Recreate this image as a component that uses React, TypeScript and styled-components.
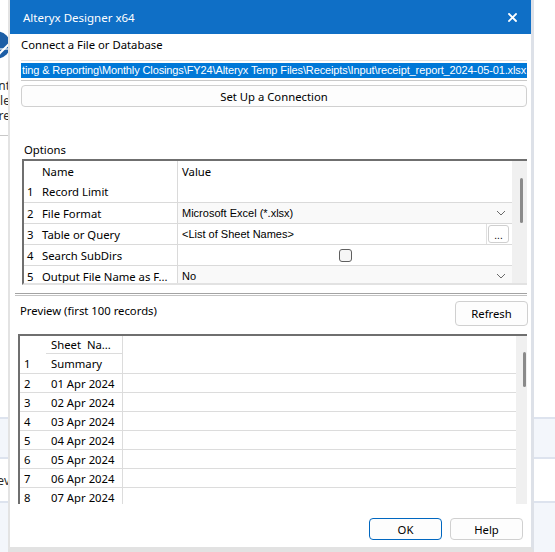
import React from "react";
import styled, { createGlobalStyle } from "styled-components";

const UI = `"Noto Sans", "Segoe UI", sans-serif`;
const CLASSIC = `"Liberation Sans", Arial, sans-serif`;

const GlobalStyle = createGlobalStyle`
  html, body { margin: 0; padding: 0; }
  body {
    font-family: ${UI};
    font-size: 11.3px;
    color: #000;
    background: #fff;
  }
`;

const Desktop = styled.div`
  position: relative;
  width: 555px;
  height: 552px;
  overflow: hidden;
  background: #fff;
`;

/* ---------- app window behind the dialog ---------- */

const Backdrop = styled.div`
  display: flex;
  flex-direction: column;
  height: 100%;
`;

const BackTop = styled.div`
  height: 417px;
  display: flex;
  flex-direction: column;
`;

const Clip = styled.div<{ $top?: number }>`
  width: 10px;
  overflow: hidden;
  display: flex;
  justify-content: flex-end;
  margin-top: ${(p) => p.$top ?? 0}px;
  white-space: nowrap;
  & > * {
    flex-shrink: 0;
  }
`;

const LogoClip = styled.div`
  width: 10px;
  height: 28px;
  margin-top: 31px;
  overflow: hidden;
  display: flex;
`;

const LogoSvg = styled.svg`
  flex-shrink: 0;
  margin-left: -17px;
`;

const BackText = styled.div`
  font-size: 12px;
  line-height: 15px;
  color: #2b2b2b;
`;

const BackRule = styled.div`
  width: 8px;
  height: 1px;
  margin-top: 12px;
  background: #c8c8c8;
`;

const Band = styled.div<{ $h: number; $pale?: boolean }>`
  height: ${(p) => p.$h}px;
  background: ${(p) => (p.$pale ? "#f3f6fb" : "#fff")};
  border-top: 2px solid #dde3ee;
  display: flex;
  align-items: center;
`;

const BandFill = styled.div`
  flex: 1;
  background: #f3f6fb;
  border-top: 2px solid #dde3ee;
`;

/* ---------- dialog ---------- */

const Dialog = styled.div`
  position: absolute;
  left: 8px;
  top: 0;
  width: 526px;
  height: 552px;
  box-sizing: border-box;
  border-left: 2px solid #e3e3e3;
  border-right: 3px solid #dde1e8;
  border-bottom: 5px solid #e2e2e2;
  background: #fff;
  display: flex;
  flex-direction: column;
`;

const TitleBar = styled.div`
  height: 34px;
  flex-shrink: 0;
  background: #0f6fc6;
  color: #fff;
  display: flex;
  align-items: center;
  justify-content: space-between;
  padding: 0 14px 0 13px;
  font-size: 11.5px;
`;

const Body = styled.div`
  flex: 1;
  display: flex;
  flex-direction: column;
  padding: 0 4px 0 11px;
`;

const Label = styled.div<{ $mt: number; $ml?: number }>`
  margin-top: ${(p) => p.$mt}px;
  margin-left: ${(p) => p.$ml ?? 0}px;
  line-height: 16px;
  height: 16px;
`;

const PathField = styled.div`
  margin-top: 7px;
  height: 21px;
  box-sizing: border-box;
  border-top: 1px solid #e4e4e4;
  border-bottom: 1px solid #c9c9c9;
  display: flex;
  align-items: center;
  overflow: hidden;
`;

const Selection = styled.div`
  flex: 1;
  height: 15px;
  background: #0078d7;
  color: #fff;
  font-family: ${CLASSIC};
  font-size: 11px;
  letter-spacing: -0.12px;
  line-height: 15px;
  white-space: nowrap;
  overflow: hidden;
  padding-left: 1px;
`;

const WideButton = styled.div`
  margin-top: 4px;
  height: 22px;
  box-sizing: border-box;
  border: 1px solid #d0d0d0;
  border-radius: 4px;
  background: #fdfdfd;
  display: flex;
  align-items: center;
  justify-content: center;
`;

const OptionsGrid = styled.div`
  margin: 1px 0 0 1px;
  height: 126px;
  box-sizing: border-box;
  border-top: 2px solid #6f6f6f;
  border-left: 2px solid #6f6f6f;
  border-bottom: 2px solid #e2e2e2;
  display: flex;
`;

const OptTable = styled.div`
  flex: 1;
  overflow: hidden;
`;

const OptRow = styled.div<{ $line?: boolean; $h?: number }>`
  display: grid;
  grid-template-columns: 13px 140px 1fr;
  height: ${(p) => p.$h ?? 21}px;
  box-sizing: border-box;
  border-top: ${(p) => (p.$line ? "1px solid #dadada" : "none")};
`;

const NumCell = styled.div`
  padding-left: 3px;
  display: flex;
  align-items: center;
`;

const NameCell = styled.div`
  padding-left: 5px;
  display: flex;
  align-items: center;
  white-space: nowrap;
  overflow: hidden;
`;

const ValueCell = styled.div<{ $dropdown?: boolean; $center?: boolean }>`
  border-left: 1px solid #dadada;
  padding-left: ${(p) => (p.$center ? 0 : 4)}px;
  display: flex;
  align-items: center;
  justify-content: ${(p) => (p.$center ? "center" : "flex-start")};
  background: ${(p) => (p.$dropdown ? "#f9f9f9" : "#fff")};
  font-family: ${CLASSIC};
  font-size: 11px;
  white-space: nowrap;
  overflow: hidden;
`;

const HeaderValue = styled(ValueCell)`
  font-family: ${UI};
  font-size: 11.3px;
`;

const ValueText = styled.span`
  flex: 1;
`;

const Chevron = styled.svg`
  margin-right: 6px;
  flex-shrink: 0;
`;

const EllipsisWrap = styled.div`
  align-self: stretch;
  border-left: 1px solid #e0e0e0;
  display: flex;
  align-items: center;
  padding: 0 3px 0 1px;
`;

const EllipsisButton = styled.div`
  width: 21px;
  height: 18px;
  box-sizing: border-box;
  border: 1px solid #cfcfcf;
  border-radius: 3px;
  background: #fff;
  display: flex;
  align-items: flex-end;
  justify-content: center;
  font-size: 10px;
  line-height: 12px;
`;

const Checkbox = styled.div`
  width: 13px;
  height: 13px;
  box-sizing: border-box;
  border: 1px solid #5f5f5f;
  border-radius: 3px;
  background: #f6f6f6;
`;

const ScrollTrack = styled.div<{ $w: number; $pl: number; $pt: number }>`
  width: ${(p) => p.$w}px;
  flex-shrink: 0;
  background: #f0f0f0;
  box-sizing: border-box;
  padding: ${(p) => p.$pt}px 0 0 ${(p) => p.$pl}px;
`;

const ScrollThumb = styled.div<{ $h: number }>`
  width: 3px;
  height: ${(p) => p.$h}px;
  border-radius: 2px;
  background: #8a8a8a;
`;

const Separator = styled.div`
  margin: 8px 0 0 -6px;
  height: 1px;
  border-top: 1px solid #a3a3a3;
  border-bottom: 1px solid #c3c3c3;
`;

const PreviewHeader = styled.div`
  display: flex;
  align-items: flex-start;
  justify-content: space-between;
  padding-top: 5px;
  margin-right: -1px;
`;

const PreviewLabel = styled.div`
  margin: 2px 0 0 -1px;
  line-height: 16px;
`;

const PushButton = styled.div<{ $primary?: boolean; $h: number }>`
  width: 73px;
  height: ${(p) => p.$h}px;
  box-sizing: border-box;
  border: 1px solid ${(p) => (p.$primary ? "#0067c0" : "#d0d0d0")};
  border-radius: 4px;
  background: #fdfdfd;
  display: flex;
  align-items: center;
  justify-content: center;
`;

const PreviewGrid = styled.div`
  margin: 8px 0 0 -3px;
  height: 170px;
  box-sizing: border-box;
  border-top: 2px solid #6f6f6f;
  border-left: 2px solid #6f6f6f;
  display: flex;
`;

const PreviewTable = styled.div`
  flex: 1;
  overflow: hidden;
`;

const PrevRow = styled.div<{ $h?: number; $line?: boolean }>`
  display: grid;
  grid-template-columns: 26px 77px;
  height: ${(p) => p.$h ?? 19}px;
  box-sizing: border-box;
  border-top: ${(p) => (p.$line ? "1px solid #dcdcdc" : "none")};
`;

const PrevNum = styled.div`
  padding-left: 4px;
  display: flex;
  align-items: center;
`;

const PrevCell = styled.div<{ $header?: boolean }>`
  padding-left: 5px;
  border-right: 1px solid #dcdcdc;
  border-bottom: ${(p) => (p.$header ? "1px solid #dcdcdc" : "none")};
  display: flex;
  align-items: center;
  white-space: pre;
`;

const Footer = styled.div`
  margin-top: 14px;
  display: flex;
  justify-content: flex-end;
  gap: 8px;
  padding-right: 4px;
`;

const options = [
  { n: 1, name: "Record Limit", kind: "text", value: "" },
  { n: 2, name: "File Format", kind: "dropdown", value: "Microsoft Excel (*.xlsx)" },
  { n: 3, name: "Table or Query", kind: "browse", value: "<List of Sheet Names>" },
  { n: 4, name: "Search SubDirs", kind: "check", value: "" },
  { n: 5, name: "Output File Name as F...", kind: "dropdown", value: "No" },
];

const sheets = [
  "Summary",
  "01 Apr 2024",
  "02 Apr 2024",
  "03 Apr 2024",
  "04 Apr 2024",
  "05 Apr 2024",
  "06 Apr 2024",
  "07 Apr 2024",
];

const Down = () => (
  <Chevron width="10" height="6" viewBox="0 0 10 6">
    <path d="M1 1l4 4 4-4" fill="none" stroke="#6a6a6a" strokeWidth="1" />
  </Chevron>
);

const Close = () => (
  <svg width="9" height="9" viewBox="0 0 9 9">
    <path d="M1 1l7 7M8 1l-7 7" stroke="#fff" strokeWidth="1.8" strokeLinecap="square" />
  </svg>
);

const Logo = () => (
  <LogoClip>
    <LogoSvg width="28" height="28" viewBox="0 0 28 28">
      <circle cx="14" cy="14" r="13.5" fill="#1c5ea6" />
      <path d="M11 28L27 12" stroke="#fff" strokeWidth="2" />
      <path d="M2 18h24" stroke="#fff" strokeWidth="1.2" />
    </LogoSvg>
  </LogoClip>
);

const renderValue = (o: (typeof options)[number]) => {
  if (o.kind === "dropdown")
    return (
      <ValueCell $dropdown>
        <ValueText>{o.value}</ValueText>
        <Down />
      </ValueCell>
    );
  if (o.kind === "browse")
    return (
      <ValueCell>
        <ValueText>{o.value}</ValueText>
        <EllipsisWrap>
          <EllipsisButton>...</EllipsisButton>
        </EllipsisWrap>
      </ValueCell>
    );
  if (o.kind === "check")
    return (
      <ValueCell $center>
        <Checkbox />
      </ValueCell>
    );
  return <ValueCell />;
};

export default function App() {
  return (
    <>
      <GlobalStyle />
      <Desktop>
        <Backdrop>
          <BackTop>
            <Logo />
            <Clip $top={19}>
              <BackText>Content</BackText>
            </Clip>
            <Clip>
              <BackText>File</BackText>
            </Clip>
            <Clip>
              <BackText>Store</BackText>
            </Clip>
            <BackRule />
          </BackTop>
          <Band $h={38} $pale />
          <Band $h={42}>
            <Clip>
              <BackText>Prev</BackText>
            </Clip>
          </Band>
          <BandFill />
        </Backdrop>

        <Dialog>
          <TitleBar>
            <span>Alteryx Designer x64</span>
            <Close />
          </TitleBar>
          <Body>
            <Label $mt={3}>Connect a File or Database</Label>
            <PathField>
              <Selection>
                {"ting & Reporting\\Monthly Closings\\FY24\\Alteryx Temp Files\\Receipts\\Input\\receipt_report_2024-05-01.xlsx"}
              </Selection>
            </PathField>
            <WideButton>Set Up a Connection</WideButton>

            <Label $mt={35} $ml={3}>Options</Label>
            <OptionsGrid>
              <OptTable>
                <OptRow $h={20}>
                  <NumCell />
                  <NameCell>Name</NameCell>
                  <HeaderValue>Value</HeaderValue>
                </OptRow>
                {options.map((o) => (
                  <OptRow key={o.n} $line={o.n > 1}>
                    <NumCell>{o.n}</NumCell>
                    <NameCell>{o.name}</NameCell>
                    {renderValue(o)}
                  </OptRow>
                ))}
              </OptTable>
              <ScrollTrack $w={15} $pl={8} $pt={17}>
                <ScrollThumb $h={45} />
              </ScrollTrack>
            </OptionsGrid>

            <Separator />
            <PreviewHeader>
              <PreviewLabel>Preview (first 100 records)</PreviewLabel>
              <PushButton $h={25}>Refresh</PushButton>
            </PreviewHeader>

            <PreviewGrid>
              <PreviewTable>
                <PrevRow $h={18}>
                  <PrevNum />
                  <PrevCell $header>Sheet  Na...</PrevCell>
                </PrevRow>
                {sheets.map((s, i) => (
                  <PrevRow key={s} $line={i > 0}>
                    <PrevNum>{i + 1}</PrevNum>
                    <PrevCell>{s}</PrevCell>
                  </PrevRow>
                ))}
              </PreviewTable>
              <ScrollTrack $w={11} $pl={7} $pt={16}>
                <ScrollThumb $h={35} />
              </ScrollTrack>
            </PreviewGrid>

            <Footer>
              <PushButton $primary $h={22}>OK</PushButton>
              <PushButton $h={22}>Help</PushButton>
            </Footer>
          </Body>
        </Dialog>
      </Desktop>
    </>
  );
}
